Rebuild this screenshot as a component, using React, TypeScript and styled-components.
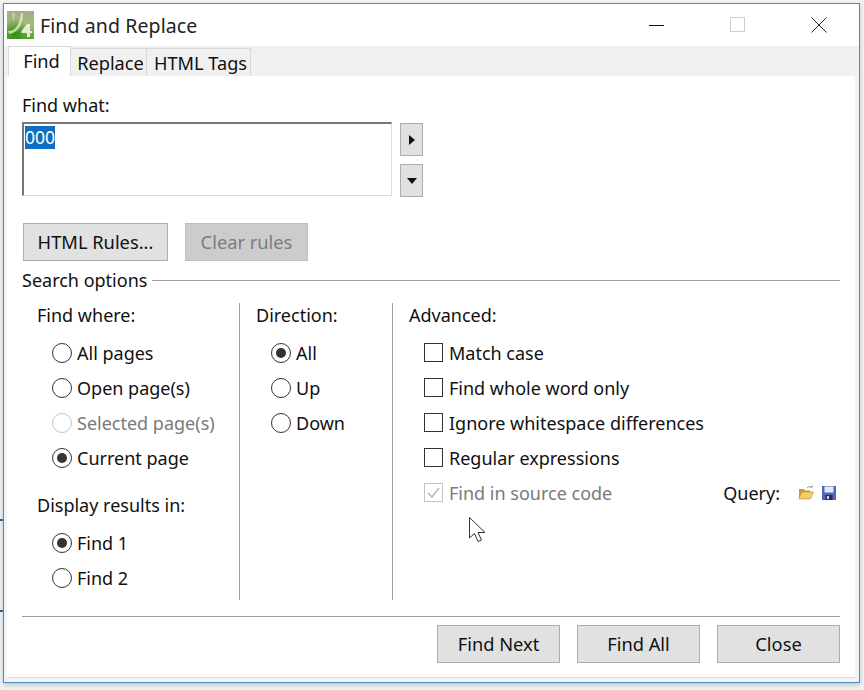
import styled, { createGlobalStyle } from "styled-components";

const Global = createGlobalStyle`
	html, body {
		margin: 0;
		padding: 0;
		background: #f2f4f5;
		font-family: "Noto Sans", "Open Sans", sans-serif;
		font-size: 18px;
		color: #111;
	}
`;

const Page = styled.div`
	position: relative;
	width: 864px;
	height: 690px;
	padding: 3px 4px 7px 3px;
	box-sizing: border-box;
	overflow: hidden;
`;

const EdgeMark = styled.div<{ $top: number }>`
	position: absolute;
	left: 0;
	top: ${(p) => p.$top}px;
	width: 3px;
	height: 2px;
	background: #2f5f8f;
`;

const Window = styled.div`
	width: 857px;
	height: 680px;
	box-sizing: border-box;
	border: 1px solid #4d8dbd;
	background: #f1f3f4;
	padding: 0 4px 4px 3px;
	box-shadow: 0 2px 5px rgba(90, 100, 110, 0.35);
	display: flex;
	flex-direction: column;
`;

const TitleBar = styled.div`
	height: 42px;
	margin: 0 -4px 0 -3px;
	padding-left: 3px;
	background: #fff;
	display: flex;
	align-items: center;
	flex-shrink: 0;
`;

const AppIcon = styled.svg`
	width: 27px;
	height: 28px;
	margin-top: -1px;
	flex-shrink: 0;
`;

const Title = styled.div`
	margin-left: 6px;
	font-size: 19.5px;
	letter-spacing: 0.1px;
	color: #222;
	white-space: nowrap;
`;

const Controls = styled.div`
	margin-left: auto;
	display: flex;
	align-items: center;
	padding-right: 32px;
`;

const Control = styled.svg`
	width: 16px;
	height: 16px;
	margin-left: 65px;
	display: block;
`;

const TabStrip = styled.div`
	height: 30px;
	margin: 0 -4px 0 -3px;
	padding-left: 4px;
	background: #f0f0f0;
	display: flex;
	align-items: flex-end;
	flex-shrink: 0;
`;

const Tab = styled.div<{ $active?: boolean; $w: number }>`
	width: ${(p) => p.$w}px;
	height: ${(p) => (p.$active ? 30 : 28)}px;
	box-sizing: border-box;
	padding-left: 4px;
	background: ${(p) => (p.$active ? "#fff" : "#f0f0f0")};
	border: 1px solid #d9d9d9;
	border-bottom: none;
	border-left-width: ${(p) => (p.$active ? 1 : 0)}px;
	font-size: 18.2px;
	line-height: 28px;
	text-align: center;
	white-space: nowrap;
	color: #111;
`;

const Body = styled.div`
	flex: 1;
	background: #fff;
	padding: 0 15px 0 15px;
	border-bottom: 1px solid #dcdcdc;
	display: flex;
	flex-direction: column;
`;

const FieldLabel = styled.div`
	margin-top: 17px;
	height: 25px;
	line-height: 25px;
	font-size: 18px;
`;

const FindRow = styled.div`
	margin-top: 4px;
	display: flex;
`;

const FindBox = styled.div`
	width: 370px;
	height: 74px;
	box-sizing: border-box;
	border: 1px solid #dcdcdc;
	border-top: 2px solid #777;
	border-left: 2px solid #777;
	padding: 1px 0 0 1px;
`;

const Selected = styled.span`
	display: inline-block;
	background: #0f6fc0;
	color: #fff;
	font-size: 17.5px;
	line-height: 23px;
	height: 23px;
`;

const ArrowStack = styled.div`
	margin-left: 8px;
	margin-top: 1px;
	display: flex;
	flex-direction: column;
	gap: 8px;
`;

const ArrowButton = styled.div`
	width: 23px;
	height: 33px;
	box-sizing: border-box;
	background: #e1e1e1;
	border: 1px solid #adadad;
	display: flex;
	align-items: center;
	justify-content: center;
`;

const RuleButtons = styled.div`
	margin-top: 26px;
	margin-left: 1px;
	display: flex;
	gap: 17px;
`;

const Button = styled.div<{ $w: number; $disabled?: boolean }>`
	width: ${(p) => p.$w}px;
	height: 38px;
	box-sizing: border-box;
	background: ${(p) => (p.$disabled ? "#cccccc" : "#e1e1e1")};
	border: 1px solid ${(p) => (p.$disabled ? "#bfbfbf" : "#adadad")};
	color: ${(p) => (p.$disabled ? "#7d7d7d" : "#111")};
	font-size: 18.3px;
	line-height: 35px;
	text-align: center;
	white-space: nowrap;
`;

const GroupHeader = styled.div`
	margin-top: 6px;
	height: 26px;
	display: flex;
	align-items: center;
	gap: 5px;
	font-size: 18px;
`;

const HeaderRule = styled.div`
	flex: 1;
	height: 1px;
	background: #a0a0a0;
`;

const Columns = styled.div`
	margin-top: 10px;
	height: 297px;
	display: flex;
`;

const Column = styled.div<{ $w: number; $pad: number; $line?: boolean }>`
	width: ${(p) => p.$w}px;
	box-sizing: border-box;
	padding-left: ${(p) => p.$pad}px;
	border-right: ${(p) => (p.$line ? "1px solid #a0a0a0" : "none")};
	flex-shrink: 0;
`;

const WideColumn = styled(Column)`
	flex: 1;
	width: auto;
`;

const ColumnTitle = styled.div<{ $gap?: number }>`
	height: 25px;
	line-height: 25px;
	margin-top: ${(p) => p.$gap ?? 0}px;
	margin-bottom: 7px;
	font-size: 18px;
`;

const OptionRow = styled.div<{ $disabled?: boolean }>`
	height: 35px;
	padding-left: 15px;
	display: flex;
	align-items: center;
	font-size: 18px;
	white-space: nowrap;
	color: ${(p) => (p.$disabled ? "#7a7a7a" : "#111")};
`;

const RadioMark = styled.span<{ $checked?: boolean; $disabled?: boolean }>`
	width: 20px;
	height: 20px;
	box-sizing: border-box;
	border-radius: 50%;
	border: 1px solid ${(p) => (p.$disabled ? "#c4c4c4" : "#333")};
	background: #fff;
	margin-right: 5px;
	display: flex;
	align-items: center;
	justify-content: center;
	flex-shrink: 0;
	&::after {
		content: "";
		display: ${(p) => (p.$checked ? "block" : "none")};
		width: 10px;
		height: 10px;
		border-radius: 50%;
		background: #333;
	}
`;

const CheckMark = styled.span<{ $disabled?: boolean }>`
	width: 19px;
	height: 19px;
	box-sizing: border-box;
	border: 1px solid ${(p) => (p.$disabled ? "#c4c4c4" : "#333")};
	background: #fff;
	margin-right: 6px;
	display: flex;
	align-items: center;
	justify-content: center;
	flex-shrink: 0;
`;

const Query = styled.div`
	margin-left: auto;
	margin-right: 3px;
	display: flex;
	align-items: center;
	color: #111;
`;

const QueryIcon = styled.svg<{ $gap: number }>`
	width: 16px;
	height: 16px;
	margin-left: ${(p) => p.$gap}px;
	display: block;
`;

const Footer = styled.div`
	margin-top: 16px;
	border-top: 1px solid #a0a0a0;
	padding-top: 8px;
	display: flex;
	justify-content: flex-end;
	gap: 17px;
`;

const Cursor = styled.svg`
	position: absolute;
	left: 468px;
	top: 516px;
	width: 20px;
	height: 28px;
`;

function Radio({ label, checked, disabled }: { label: string; checked?: boolean; disabled?: boolean }) {
	return (
		<OptionRow $disabled={disabled}>
			<RadioMark $checked={checked} $disabled={disabled} />
			{label}
		</OptionRow>
	);
}

function Check({ label }: { label: string }) {
	return (
		<OptionRow>
			<CheckMark />
			{label}
		</OptionRow>
	);
}

export default function App() {
	return (
		<>
			<Global />
			<Page>
				<EdgeMark $top={519} />
				<EdgeMark $top={610} />
				<Window>
					<TitleBar>
						<AppIcon viewBox="0 0 27 28">
							<defs>
								<linearGradient id="leaf" x1="0" y1="0" x2="0" y2="1">
									<stop offset="0" stopColor="#a3ac8c" />
									<stop offset="0.5" stopColor="#a5bd78" />
									<stop offset="1" stopColor="#5aa52c" />
								</linearGradient>
								<radialGradient id="glow" cx="0.3" cy="0.8" r="0.55">
									<stop offset="0" stopColor="#2f8f12" />
									<stop offset="1" stopColor="#2f8f12" stopOpacity="0" />
								</radialGradient>
							</defs>
							<rect width="27" height="28" fill="url(#leaf)" />
							<rect width="27" height="28" fill="url(#glow)" />
							<path d="M1 20 C8 20 13 14 14 2 L16 2 C16 14 11 22 2 23 Z" fill="#eef5d8" opacity="0.7" />
							<path d="M5 2 L8 2 L6.5 12 Z" fill="#dfe8c4" opacity="0.6" />
							<path d="M20 13 L23 13 L23 20 L25 20 L25 22 L23 22 L23 26 L20 26 L20 22 L14.5 22 L14.5 20 Z" fill="#e6ecd8" />
						</AppIcon>
						<Title>Find and Replace</Title>
						<Controls>
							<Control viewBox="0 0 16 16">
								<path d="M0 8.5 H15" stroke="#111" strokeWidth="1" />
							</Control>
							<Control viewBox="0 0 16 16">
								<rect x="0.5" y="0.5" width="14" height="14" fill="none" stroke="#cfcfcf" />
							</Control>
							<Control viewBox="0 0 16 16">
								<path d="M0.5 0.5 L15.5 15.5 M15.5 0.5 L0.5 15.5" stroke="#222" strokeWidth="1" />
							</Control>
						</Controls>
					</TitleBar>
					<TabStrip>
						<Tab $active $w={63}>Find</Tab>
						<Tab $w={76}>Replace</Tab>
						<Tab $w={104}>HTML Tags</Tab>
					</TabStrip>
					<Body>
						<FieldLabel>Find what:</FieldLabel>
						<FindRow>
							<FindBox>
								<Selected>000</Selected>
							</FindBox>
							<ArrowStack>
								<ArrowButton>
									<svg width="6" height="10" viewBox="0 0 6 10">
										<path d="M0 0 L6 5 L0 10 Z" fill="#111" />
									</svg>
								</ArrowButton>
								<ArrowButton>
									<svg width="10" height="6" viewBox="0 0 10 6">
										<path d="M0 0 H10 L5 6 Z" fill="#111" />
									</svg>
								</ArrowButton>
							</ArrowStack>
						</FindRow>
						<RuleButtons>
							<Button $w={145}>HTML Rules...</Button>
							<Button $w={123} $disabled>Clear rules</Button>
						</RuleButtons>
						<GroupHeader>
							Search options
							<HeaderRule />
						</GroupHeader>
						<Columns>
							<Column $w={218} $pad={15} $line>
								<ColumnTitle>Find where:</ColumnTitle>
								<Radio label="All pages" />
								<Radio label="Open page(s)" />
								<Radio label="Selected page(s)" disabled />
								<Radio label="Current page" checked />
								<ColumnTitle $gap={18}>Display results in:</ColumnTitle>
								<Radio label="Find 1" checked />
								<Radio label="Find 2" />
							</Column>
							<Column $w={153} $pad={16} $line>
								<ColumnTitle>Direction:</ColumnTitle>
								<Radio label="All" checked />
								<Radio label="Up" />
								<Radio label="Down" />
							</Column>
							<WideColumn $w={0} $pad={16}>
								<ColumnTitle>Advanced:</ColumnTitle>
								<Check label="Match case" />
								<Check label="Find whole word only" />
								<Check label="Ignore whitespace differences" />
								<Check label="Regular expressions" />
								<OptionRow $disabled>
									<CheckMark $disabled>
										<svg width="15" height="13" viewBox="0 0 15 13">
											<path d="M2 7 L6 11 L13 2" fill="none" stroke="#b4b4b4" strokeWidth="1.4" />
										</svg>
									</CheckMark>
									Find in source code
									<Query>
										Query:
										<QueryIcon $gap={18} viewBox="0 0 16 16">
											<path d="M1 4 H6 L7 5.5 H12 V7 H4 L1 14 Z" fill="#c99a2e" />
											<path d="M4 7 H15.5 L12.5 14 H1 Z" fill="#f5cf6b" stroke="#b98a2a" strokeWidth="0.6" />
											<path d="M9 3 Q11 0.5 14 2 M14 2 L14.5 0.5 M14 2 L12.4 2.4" fill="none" stroke="#8a8f7a" strokeWidth="0.9" />
										</QueryIcon>
										<QueryIcon $gap={7} viewBox="0 0 16 16">
											<rect x="1" y="1" width="14" height="14" fill="#5465b5" />
											<rect x="3.5" y="1.5" width="9" height="6" fill="#e6e9f5" />
											<rect x="4.5" y="10" width="7" height="5" fill="#1f2a66" />
											<rect x="6" y="11" width="2" height="3" fill="#d5d9ea" />
										</QueryIcon>
									</Query>
								</OptionRow>
							</WideColumn>
						</Columns>
						<Footer>
							<Button $w={123}>Find Next</Button>
							<Button $w={123}>Find All</Button>
							<Button $w={123}>Close</Button>
						</Footer>
					</Body>
				</Window>
				<Cursor viewBox="0 0 20 28">
					<path d="M1.5 1.5 V22 L6.5 17.5 L10 25.5 L13.5 24 L10 16.5 L17 16.5 Z" fill="#fff" stroke="#333" strokeWidth="1" />
				</Cursor>
			</Page>
		</>
	);
}
